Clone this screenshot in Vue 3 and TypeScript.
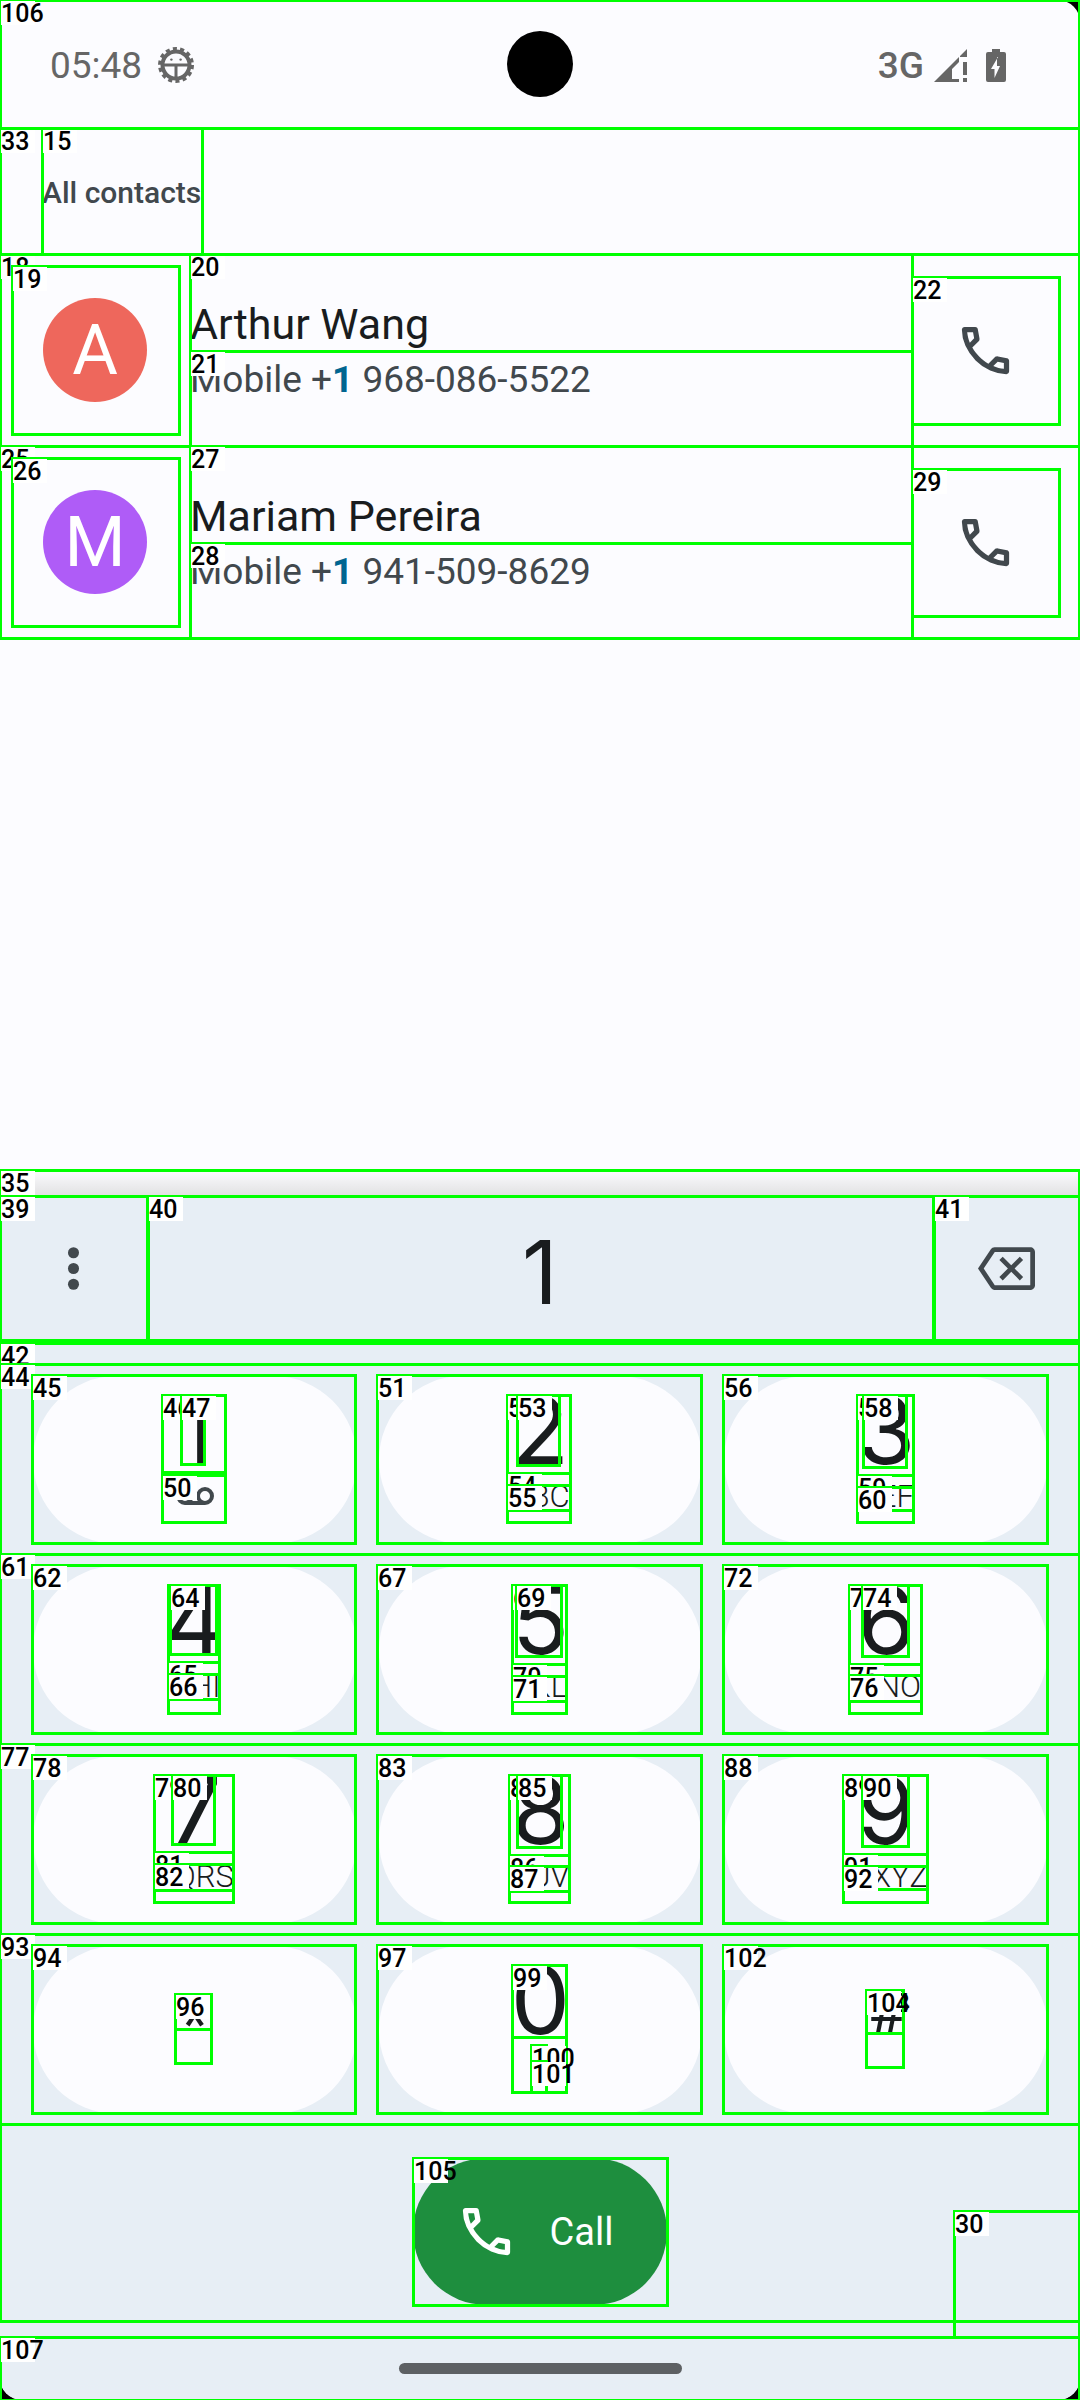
<script setup lang="ts">
import { ref } from 'vue'

interface Contact {
  initial: string
  name: string
  match: string
  rest: string
  color: string
}

interface Key {
  digit: string
  letters?: string
  kind?: 'voicemail' | 'star' | 'hash'
}

// id, left, top, right, bottom
type Mark = [number, number, number, number, number]

const PAGE_WIDTH = 1080

const contacts: Contact[] = [
  { initial: 'A', name: 'Arthur Wang', match: '1', rest: '968-086-5522', color: '#ee675c' },
  { initial: 'M', name: 'Mariam Pereira', match: '1', rest: '941-509-8629', color: '#af5cf7' },
]

const keys: Key[] = [
  { digit: '1', kind: 'voicemail' },
  { digit: '2', letters: 'ABC' },
  { digit: '3', letters: 'DEF' },
  { digit: '4', letters: 'GHI' },
  { digit: '5', letters: 'JKL' },
  { digit: '6', letters: 'MNO' },
  { digit: '7', letters: 'PQRS' },
  { digit: '8', letters: 'TUV' },
  { digit: '9', letters: 'WXYZ' },
  { digit: '*', kind: 'star' },
  { digit: '0', letters: '+' },
  { digit: '#', kind: 'hash' },
]

const marks: Mark[] = [
  [15, 42, 128, 203, 254],
  [18, 0, 254, 1080, 446],
  [19, 12, 266, 180, 434],
  [20, 190, 254, 913, 351],
  [21, 190, 351, 913, 446],
  [22, 912, 277, 1060, 424],
  [25, 0, 446, 1080, 638],
  [26, 12, 458, 180, 626],
  [27, 190, 446, 913, 543],
  [28, 190, 543, 913, 638],
  [29, 912, 469, 1060, 616],
  [30, 954, 2211, 1080, 2337],
  [33, 0, 128, 1080, 254],
  [35, 0, 1170, 1080, 2321],
  [39, 0, 1196, 148, 1340],
  [40, 148, 1196, 934, 1340],
  [41, 934, 1196, 1080, 1340],
  [42, 0, 1343, 1080, 2124],
  [44, 0, 1364, 1080, 1554],
  [45, 32, 1375, 356, 1543],
  [46, 162, 1395, 226, 1472],
  [47, 181, 1395, 205, 1464],
  [50, 162, 1475, 226, 1522],
  [51, 377, 1375, 702, 1543],
  [52, 507, 1395, 571, 1473],
  [53, 517, 1395, 560, 1465],
  [54, 507, 1473, 571, 1522],
  [55, 507, 1485, 571, 1510],
  [56, 723, 1375, 1048, 1543],
  [57, 857, 1395, 914, 1475],
  [58, 863, 1395, 907, 1467],
  [59, 857, 1475, 914, 1522],
  [60, 857, 1487, 914, 1510],
  [61, 0, 1554, 1080, 1744],
  [62, 32, 1565, 356, 1733],
  [63, 168, 1585, 220, 1662],
  [64, 170, 1585, 217, 1654],
  [65, 168, 1662, 220, 1713],
  [66, 168, 1674, 220, 1699],
  [67, 377, 1565, 702, 1733],
  [68, 512, 1585, 567, 1664],
  [69, 516, 1585, 562, 1656],
  [70, 512, 1664, 567, 1713],
  [71, 512, 1676, 567, 1701],
  [72, 723, 1565, 1048, 1733],
  [73, 849, 1585, 922, 1664],
  [74, 862, 1585, 909, 1656],
  [75, 849, 1664, 922, 1713],
  [76, 849, 1675, 922, 1701],
  [77, 0, 1744, 1080, 1934],
  [78, 32, 1755, 356, 1923],
  [79, 154, 1775, 234, 1852],
  [80, 172, 1775, 215, 1844],
  [81, 154, 1852, 234, 1902],
  [82, 154, 1864, 234, 1890],
  [83, 377, 1755, 702, 1923],
  [84, 509, 1775, 570, 1855],
  [85, 517, 1775, 562, 1847],
  [86, 509, 1855, 570, 1902],
  [87, 509, 1866, 570, 1891],
  [88, 723, 1755, 1048, 1923],
  [89, 843, 1775, 928, 1854],
  [90, 862, 1775, 909, 1846],
  [91, 843, 1854, 928, 1902],
  [92, 843, 1866, 928, 1889],
  [93, 0, 1934, 1080, 2124],
  [94, 32, 1945, 356, 2113],
  [95, 175, 1994, 212, 2063],
  [96, 175, 1994, 212, 2029],
  [97, 377, 1945, 702, 2113],
  [98, 512, 1965, 567, 2092],
  [99, 512, 1965, 567, 2037],
  [100, 531, 2045, 547, 2092],
  [101, 531, 2061, 547, 2092],
  [102, 723, 1945, 1048, 2113],
  [103, 866, 1990, 904, 2067],
  [104, 866, 1990, 904, 2033],
  [105, 413, 2158, 668, 2305],
  [106, 0, 0, 1080, 128],
  [107, 0, 2337, 1080, 2400],
]

const number = ref('1')

function press(key: Key) {
  number.value += key.digit
}

function erase() {
  number.value = number.value.slice(0, -1)
}

function markStyle([, left, top, right, bottom]: Mark) {
  return {
    left: `calc(${(left / PAGE_WIDTH) * 100}% - 1px)`,
    top: `${top - 1}px`,
    width: `calc(${((right - left) / PAGE_WIDTH) * 100}% + 2px)`,
    height: `${bottom - top + 3}px`,
  }
}

const callPath =
  'M798-120q-125 0-247-54.5T329-329Q229-429 174.5-551T120-798q0-18 12-30t30-12h162q14 0 25 9.5t13 22.5l26 140q2 16-1 27t-11 19l-97 98q20 37 47.5 71.5T387-386q31 31 65 57.5t72 48.5l94-94q9-9 23.5-13.5T670-390l138 28q14 4 23 14.5t9 23.5v162q0 18-12 30t-30 12ZM241-600l66-66-17-94h-89q5 41 14 81t26 79Zm358 358q39 17 79.5 27t81.5 13v-88l-94-19-67 67Z'
</script>

<template>
  <div class="device">
    <div class="screen">
      <header class="status">
        <div class="status-side">
          <span class="clock">05:48</span>
          <svg class="debug-icon" viewBox="0 0 36 36" aria-hidden="true">
            <circle cx="18" cy="18" r="16" fill="none" stroke="currentColor" stroke-width="4" stroke-dasharray="4 3.181" />
            <circle cx="18" cy="18" r="13.5" fill="none" stroke="currentColor" stroke-width="4" />
            <path d="M5 16.500h26v3H5zM16.500 18h3v14h-3z" fill="currentColor" />
            <circle cx="13.4" cy="12.6" r="1.2" fill="currentColor" />
            <circle cx="22.6" cy="12.6" r="1.2" fill="currentColor" />
          </svg>
        </div>
        <div class="camera"></div>
        <div class="status-side status-end">
          <span class="network">3G</span>
          <svg class="signal-icon" viewBox="0 0 33 33" aria-hidden="true">
            <path d="M0 33 25 8v5l-7 7v10h7v3zM26 7l7-7v8h-7zM29 13h4v13h-4zM29 29h4v4h-4z" fill="currentColor" />
          </svg>
          <svg class="battery-icon" viewBox="0 0 20 33" aria-hidden="true">
            <path fill-rule="evenodd" d="M6 0h8v3h4q2 0 2 2v26q0 2-2 2H2q-2 0-2-2V5q0-2 2-2h4zM12 8 5 20h3.500v9L14 17h-3V8z" fill="currentColor" />
          </svg>
        </div>
      </header>

      <main class="results">
        <h1 class="section-title">All contacts</h1>
        <ul class="contacts">
          <li v-for="c in contacts" :key="c.name" class="contact">
            <div class="avatar-cell">
              <span class="avatar" :style="{ background: c.color }">{{ c.initial }}</span>
            </div>
            <div class="contact-text">
              <div class="contact-name">{{ c.name }}</div>
              <div class="contact-number">Mobile +<b>{{ c.match }}</b> {{ c.rest }}</div>
            </div>
            <button class="contact-call" type="button" :aria-label="`Call ${c.name}`">
              <svg class="icon" viewBox="0 -960 960 960"><path :d="callPath" fill="currentColor" /></svg>
            </button>
          </li>
        </ul>
      </main>

      <div class="panel-shadow"></div>
      <section class="panel">
        <div class="entry">
          <button class="entry-button" type="button" aria-label="More options">
            <svg class="icon" viewBox="0 0 24 24" fill="currentColor">
              <circle cx="12" cy="6" r="2.1" /><circle cx="12" cy="12" r="2.1" /><circle cx="12" cy="18" r="2.1" />
            </svg>
          </button>
          <input v-model="number" class="entry-number" type="tel" aria-label="Phone number" />
          <button class="entry-button" type="button" aria-label="Backspace" @click="erase">
            <svg class="erase-icon" viewBox="0 0 24 24">
              <path
                fill="currentColor"
                d="M22 3H7c-.69 0-1.23.35-1.59.88L0 12l5.41 8.11c.36.53.9.89 1.59.89h15c1.1 0 2-.9 2-2V5c0-1.1-.9-2-2-2zm0 16H7.07L2.4 12l4.66-7H22v14zm-11.59-2L14 13.41 17.59 17 19 15.59 15.41 12 19 8.41 17.59 7 14 10.59 10.41 7 9 8.41 12.59 12 9 15.59z"
              />
            </svg>
          </button>
        </div>

        <div class="keypad">
          <button v-for="k in keys" :key="k.digit" class="key" :class="k.kind" type="button" @click="press(k)">
            <span class="digit">{{ k.digit }}</span>
            <svg v-if="k.kind === 'voicemail'" class="voicemail-icon" viewBox="0 0 38 18" aria-label="Voicemail">
              <g fill="none" stroke="currentColor" stroke-width="4">
                <circle cx="9" cy="9" r="7" /><circle cx="29" cy="9" r="7" /><path d="M9 16h20" />
              </g>
            </svg>
            <span v-if="k.letters" class="letters">{{ k.letters }}</span>
          </button>
        </div>

        <div class="actions">
          <button class="call" type="button">
            <svg class="icon" viewBox="0 -960 960 960" aria-hidden="true"><path :d="callPath" fill="currentColor" /></svg>
            <span>Call</span>
          </button>
        </div>

        <footer class="nav"><div class="handle"></div></footer>
      </section>
    </div>

    <div class="marks">
      <div v-for="m in marks" :key="m[0]" class="mark" :style="markStyle(m)">
        <span class="mark-id">{{ m[0] }}</span>
      </div>
    </div>
  </div>
</template>

<style>
body {
  margin: 0;
  background: #000;
}
</style>

<style scoped>
.device {
  position: relative;
  overflow: hidden;
  background: #000;
  font-family: Roboto, "Liberation Sans", sans-serif;
}

.screen {
  display: flex;
  flex-direction: column;
  min-height: 100vh;
  border-radius: 22px;
  overflow: hidden;
  background: #fcfcff;
  color: #191c1e;
}

button {
  display: flex;
  align-items: center;
  justify-content: center;
  padding: 0;
  border: 0;
  background: none;
  color: #41484d;
  font-family: inherit;
  cursor: pointer;
}

.icon {
  width: 63px;
  height: 63px;
}

.status {
  display: grid;
  grid-template-columns: minmax(0, 1fr) 66px minmax(0, 1fr);
  align-items: center;
  height: 128px;
  color: #666;
  font-size: 37px;
}

.status-side {
  display: flex;
  align-items: center;
  gap: 16px;
  padding: 2px 0 0 50px;
}

.status-end {
  justify-content: flex-end;
  gap: 10px;
  padding: 2px 74px 0 0;
}

.network {
  font-weight: 500;
}

.debug-icon {
  width: 36px;
  height: 36px;
}

.signal-icon {
  width: 33px;
  height: 33px;
}

.battery-icon {
  width: 20px;
  height: 33px;
  margin-left: 9px;
}

.camera {
  height: 66px;
  border-radius: 50%;
  background: #000;
}

.results {
  flex: 1;
}

.section-title {
  height: 126px;
  margin: 0;
  padding-left: 42px;
  color: #41484d;
  font-size: 30px;
  font-weight: 500;
  line-height: 130px;
}

.contacts {
  margin: 0;
  padding: 0;
  list-style: none;
}

.contact {
  display: flex;
  align-items: center;
  height: 192px;
  padding-right: 20px;
}

.avatar-cell {
  flex: none;
  width: 147px;
  padding-left: 43px;
}

.avatar {
  display: flex;
  align-items: center;
  justify-content: center;
  width: 104px;
  height: 104px;
  border-radius: 50%;
  color: #fff;
  font-size: 70px;
  line-height: 104px;
}

.contact-text {
  flex: 1;
  padding-top: 4px;
  line-height: 56px;
}

.contact-name {
  font-size: 43px;
}

.contact-number {
  color: #41484d;
  font-size: 37px;
}

.contact-number b {
  color: #006590;
}

.contact-call {
  width: 149px;
  height: 147px;
}

.panel-shadow {
  height: 26px;
  background: linear-gradient(#fcfcff, #e1e1e2);
}

.panel {
  background: #e7eef5;
}

.entry {
  display: flex;
  height: 144px;
}

.entry-button {
  flex: none;
  width: 147px;
}

.erase-icon {
  width: 57px;
  height: 57px;
}

.entry-number {
  flex: 1;
  min-width: 0;
  padding: 8px 0 0;
  border: 0;
  outline: 0;
  background: none;
  color: #191c1e;
  font-family: Inter, sans-serif;
  font-size: 88px;
  text-align: center;
}

.keypad {
  display: grid;
  grid-template-columns: repeat(3, 1fr);
  gap: 22px;
  padding: 36px 32px 0 33px;
}

.key {
  flex-direction: column;
  justify-content: flex-start;
  height: 168px;
  box-sizing: border-box;
  padding-top: 12px;
  border-radius: 84px;
  background: #fcfcff;
  color: #191c1e;
}

.digit {
  font-family: Inter, sans-serif;
  font-size: 94px;
  line-height: 84px;
}

.letters {
  margin-top: 7px;
  font-size: 31px;
  font-weight: 300;
  line-height: 36px;
}

.voicemail-icon {
  width: 38px;
  height: 18px;
  margin-top: 15px;
  color: #41484d;
}

.star,
.hash {
  justify-content: center;
  padding: 0 0 34px;
}

.star {
  padding-bottom: 12px;
}

.star .digit,
.hash .digit {
  font-family: Roboto, sans-serif;
  font-size: 60px;
  line-height: 64px;
}

.actions {
  display: flex;
  justify-content: center;
  padding: 44px 0 32px;
}

.call {
  box-sizing: border-box;
  gap: 32px;
  width: 254px;
  height: 147px;
  padding-right: 12px;
  border-radius: 74px;
  background: #1e8e3e;
  color: #fff;
  font-size: 38px;
}

.nav {
  display: flex;
  justify-content: center;
  height: 63px;
}

.handle {
  width: 283px;
  height: 11px;
  margin-top: 26px;
  border-radius: 6px;
  background: #5d6063;
}

.marks {
  position: absolute;
  inset: 0;
  overflow: hidden;
  pointer-events: none;
}

.mark {
  position: absolute;
  box-sizing: border-box;
  border: 3px solid #0f0;
}

.mark-id {
  position: absolute;
  top: -1px;
  left: -1px;
  width: 34px;
  height: 24px;
  background: #fff;
  color: #000;
  font-size: 25px;
  font-weight: 500;
  line-height: 25px;
  white-space: nowrap;
}
</style>
